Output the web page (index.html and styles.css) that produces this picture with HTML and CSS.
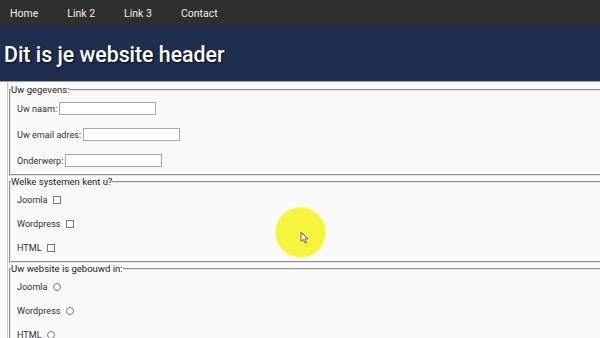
FILE: index.html
```html
<!DOCTYPE html>
<html lang="nl">
<head>
    <meta charset="UTF-8">
    <meta name="viewport" content="width=device-width, initial-scale=1.0">
    <title>Website</title>
    <link rel="stylesheet" href="styles.css">
</head>
<body>

    <nav class="topnav">
        <a href="#">Home</a>
        <a href="#">Link 2</a>
        <a href="#">Link 3</a>
        <a href="#">Contact</a>
    </nav>

    <header class="site-header">
        <h1>Dit is je website header</h1>
    </header>

    <main class="content">
        <form>
            <fieldset>
                <legend>Uw gegevens:</legend>
                <div class="row">
                    <label for="naam">Uw naam:</label>
                    <input type="text" id="naam" class="text-input">
                </div>
                <div class="row">
                    <label for="email">Uw email adres:</label>
                    <input type="text" id="email" class="text-input">
                </div>
                <div class="row">
                    <label for="onderwerp">Onderwerp:</label>
                    <input type="text" id="onderwerp" class="text-input">
                </div>
            </fieldset>

            <fieldset class="choices">
                <legend>Welke systemen kent u?</legend>
                <div class="row"><label>Joomla</label><span class="box"></span></div>
                <div class="row"><label>Wordpress</label><span class="box"></span></div>
                <div class="row"><label>HTML</label><span class="box"></span></div>
            </fieldset>

            <fieldset class="choices">
                <legend>Uw website is gebouwd in:</legend>
                <div class="row"><label>Joomla</label><span class="box round"></span></div>
                <div class="row"><label>Wordpress</label><span class="box round"></span></div>
                <div class="row"><label>HTML</label><span class="box round"></span></div>
            </fieldset>
        </form>
    </main>

    <!-- cursor highlight from the screen recording -->
    <div class="cursor-spot">
        <svg class="cursor" width="9" height="13" viewBox="0 0 9 13">
            <path d="M1 1 L1 10.5 L3.3 8.4 L5 12 L6.5 11.3 L4.9 7.8 L8 7.8 Z" fill="#f4f4f0" stroke="#6a6a60" stroke-width="1" stroke-linejoin="round"/>
        </svg>
    </div>

</body>
</html>
```

FILE: styles.css
```css
body {
    margin: 0;
    font-family: Roboto, "Liberation Sans", Arial, sans-serif;
    background-color: #fafafa;
    color: #333;
    overflow: hidden;
}
.topnav {
    display: flex;
    gap: 29px;
    height: 26px;
    align-items: center;
    padding-left: 10px;
    background-color: #2f2f2f;
}
.topnav a {
    color: #eeeeee;
    text-decoration: none;
    font-size: 10.5px;
}
.site-header {
    height: 55px;
    display: flex;
    align-items: center;
    background-color: #1f2d4f;
    border-bottom: 1px solid #9a9ea8;
}
.site-header h1 {
    margin: 0 0 0 4px;
    padding-top: 1px;
    color: #ffffff;
    font-size: 21.3px;
    font-weight: 500;
    text-shadow: 1px 1px 2px rgba(0, 0, 0, 0.7);
}
.content {
    margin-left: 7px;
    border-left: 1px solid #c8c8c8;
    padding-top: 2px;
}
fieldset {
    margin: 0 -20px 0 1px;
    padding: 6px 0 7px 6px;
    border: 2px groove #e4e4e4;
    background-color: #fafafa;
}
fieldset.choices {
    padding: 5px 0 7px 6px;
}
legend {
    padding: 0;
    margin-left: -6px;
    font-size: 9.5px;
    line-height: 12px;
    color: #222;
}
.row {
    display: flex;
    align-items: center;
    height: 13px;
    margin-bottom: 13px;
    font-size: 9.1px;
}
.row:last-child {
    margin-bottom: 0;
}
.choices .row {
    margin-bottom: 11px;
}
.choices .row:last-child {
    margin-bottom: 0;
}
.text-input {
    box-sizing: border-box;
    width: 97px;
    height: 13px;
    margin: 0 0 0 2px;
    padding: 0;
    border: 1px solid #a8a8a8;
    background-color: #fff;
}
.box {
    display: inline-block;
    box-sizing: border-box;
    width: 8px;
    height: 8px;
    margin-left: 5px;
    border: 1px solid #7a7a7a;
    background-color: #fff;
}
.box.round {
    border-radius: 50%;
}
.cursor-spot {
    position: absolute;
    left: 276px;
    top: 208px;
    width: 49px;
    height: 49px;
    border-radius: 50%;
    background-color: #f6f53c;
    box-shadow: 0 0 2px 1px rgba(246, 245, 60, 0.6);
}
.cursor {
    position: absolute;
    left: 24px;
    top: 23px;
}
```
